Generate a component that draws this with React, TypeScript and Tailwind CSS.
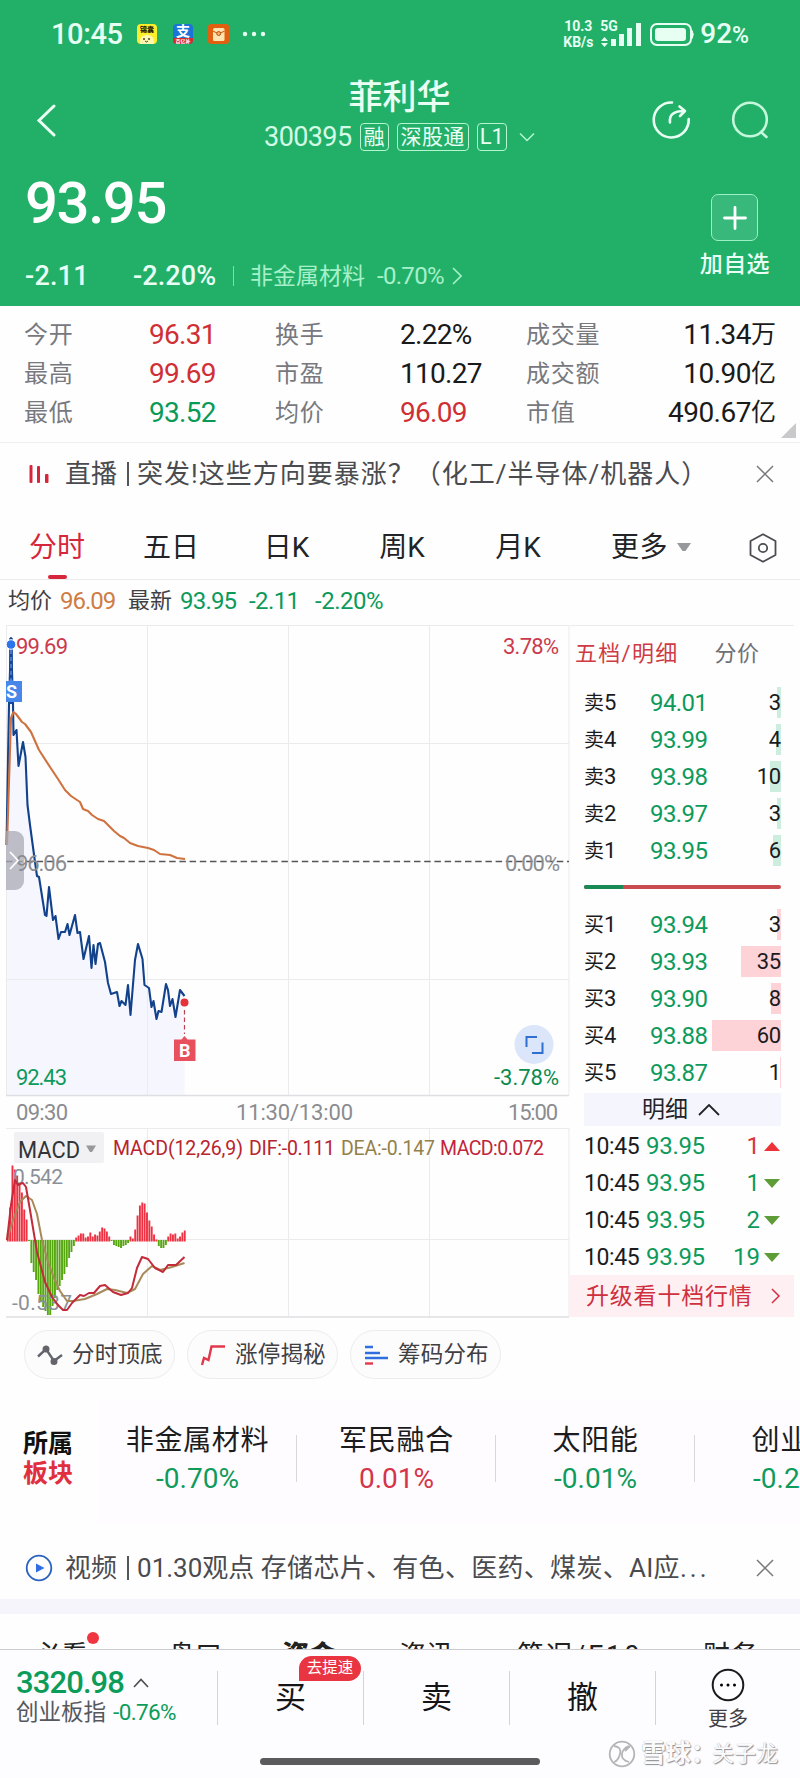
import { ReactNode } from "react";

const stats = [
  [
    { label: "今开", value: "96.31", color: "text-[#cf2f35]" },
    { label: "最高", value: "99.69", color: "text-[#cf2f35]" },
    { label: "最低", value: "93.52", color: "text-[#0a9a58]" },
  ],
  [
    { label: "换手", value: "2.22%", color: "text-[#1a1a1a]" },
    { label: "市盈", value: "110.27", color: "text-[#1a1a1a]" },
    { label: "均价", value: "96.09", color: "text-[#cf2f35]" },
  ],
];

const totals = [
  { label: "成交量", value: "11.34", unit: "万" },
  { label: "成交额", value: "10.90", unit: "亿" },
  { label: "市值", value: "490.67", unit: "亿" },
];

const asks = [
  { label: "卖5", price: "94.01", volume: 3, width: 4 },
  { label: "卖4", price: "93.99", volume: 4, width: 5 },
  { label: "卖3", price: "93.98", volume: 10, width: 11 },
  { label: "卖2", price: "93.97", volume: 3, width: 4 },
  { label: "卖1", price: "93.95", volume: 6, width: 8 },
];

const bids = [
  { label: "买1", price: "93.94", volume: 3, width: 4 },
  { label: "买2", price: "93.93", volume: 35, width: 40 },
  { label: "买3", price: "93.90", volume: 8, width: 10 },
  { label: "买4", price: "93.88", volume: 60, width: 69 },
  { label: "买5", price: "93.87", volume: 1, width: 1 },
];

const trades = [
  { volume: 1, up: true },
  { volume: 1, up: false },
  { volume: 2, up: false },
  { volume: 19, up: false },
];

const sectors = [
  { name: "非金属材料", change: "-0.70%", color: "text-[#0e9b5c]" },
  { name: "军民融合", change: "0.01%", color: "text-[#d5344a]" },
  { name: "太阳能", change: "-0.01%", color: "text-[#0e9b5c]" },
  { name: "创业板", change: "-0.25%", color: "text-[#0e9b5c]" },
];

// one bar per minute since the open
const macdBars = [
  8, 34, 76, 72, 66, 58, 49, 32, 22, -1, -23, -32, -40, -54, -62, -67, -71, -75, -75, -66, -58, -50, -46, -40, -34,
  -27, -18, -12, -6, 4, 6, 8, 8, 4, 5, 9, 5, 7, 6, 10, 14, 13, 10, 5, -1, -5, -6, -7, -8, -6, -5, -3, 5, 3, 12, 26,
  36, 39, 38, 29, 21, 15, 7, 2, -6, -8, -8, -5, 5, 8, 7, 8, 3, 5, 9, 11,
];

const pricePoints =
  "6.5,845 9,704 11,638 13,704 13.5,735 16.5,730 18.5,766 23,742 25.5,757 27.5,805 30,825 35,862 37,876 39,877 45,915 46.5,916 49,887 53,920 55.5,916 58.5,939 61,932 65,932 67.5,924 69.5,935 75,915 77.5,933 80,932 83.5,959 89,936 91.5,968 93.5,945 95.5,964 98,944 100,943 105,962 108,983 111,994 117,992 119.5,1006 121.5,1001 125.5,1005 128,985 130.5,1015 135,960 138,944 142.5,959 144.5,985 149,988 151.5,1007 153.5,1001 156.5,1019 158.5,1011 161.5,1012 166,984 168,990 170,1006 172.5,999 175.5,1017 180,990 184.5,996";

const averagePoints =
  "7,845 11,718 13.5,712 16,714 22,722 25,724 31,732 39,750 50,767 58,779 65,790 71,796 80,802 83,809 88,811 92,815 98,819 104,821 110,827 114,831 120,836 124,838 130,843 138,846 148,848 154,850 160,854 170,855 177,858 185,859";

const difPoints =
  "7,1240 11,1205 15,1180 18,1185 20,1184 23,1183 26,1187 30,1210 37,1252 45,1282 52,1297 58,1305 63,1310 67,1310 72,1303 80,1295 84,1296 89,1293 94,1293 100,1286 105,1285 113,1292 121,1295 128,1293 132,1288 137,1268 142,1257 148,1259 155,1268 163,1272 168,1265 176,1265 184.5,1257";

const deaPoints =
  "7,1240 13,1220 20,1202 26,1196 32,1200 37,1214 42,1240 48,1262 54,1278 60,1291 67,1301 73,1301 85,1299 97,1294 107,1289 115,1290 127,1293 135,1289 143,1274 152,1266 160,1270 172,1267 184.5,1263";

const StatusBar = () => (
  <div className="flex h-[68px] items-center justify-between pl-[51px] pr-[51px] text-[#e6fff2]">
    <div className="flex items-center">
      <span className="w-[86px] text-[29px] font-medium leading-none tracking-[-0.4px]">10:45</span>
      <span className="flex size-5 flex-col items-center overflow-hidden rounded bg-[#fdee2c]">
        <span className="mt-[2px] text-[7px] font-black leading-[8px] text-[#2a2408]">锦囊</span>
        <svg viewBox="0 0 20 10" className="h-[10px] w-5">
          <path d="M3 7c0-8 14-8 14 0v4H3z" fill="#fff6b0" />
          <circle cx="7" cy="5" r="1" fill="#442" />
          <circle cx="12" cy="5" r="1" fill="#442" />
          <path d="M8 7q1.500 2 3 0" fill="none" stroke="#442" />
        </svg>
      </span>
      <span className="ml-4 flex size-5 flex-col items-center overflow-hidden rounded bg-[#1c74d8]">
        <span className="text-[14px] font-bold leading-[14px] text-white">支</span>
        <span className="h-[6px] w-5 bg-[#d92b2b] text-center text-[5px] font-bold leading-[6px] text-white">百亿补</span>
      </span>
      <svg viewBox="0 0 21 20" className="ml-[15px] h-5 w-[21px]">
        <rect width="21" height="20" rx="3" fill="#e0600f" />
        <rect x="5" y="4" width="11.500" height="13" rx="1.500" fill="#ffe3b0" />
        <path d="M5 7q5.500 4 11.500 0" fill="none" stroke="#d8691f" strokeWidth="1.200" />
        <circle cx="10.700" cy="9.500" r="2" fill="#f6b15a" stroke="#b4501a" />
      </svg>
      <svg viewBox="0 0 24 6" className="ml-[13px] h-[6px] w-6 fill-current">
        <circle cx="3" cy="3" r="2.200" />
        <circle cx="12" cy="3" r="2.200" />
        <circle cx="21" cy="3" r="2.200" />
      </svg>
    </div>
    <div className="flex items-center">
      <div className="w-[36px] text-[14px] font-bold leading-[16px]">
        <div>10.3</div>
        <div className="-ml-px">KB/s</div>
      </div>
      <div className="relative h-8 w-[42px]">
        <span className="absolute left-0 top-0 text-[14px] font-bold leading-[16px]">5G</span>
        <svg viewBox="0 0 42 32" className="absolute inset-0 fill-current">
          <path d="M1 23l3.500-4 3.500 4zM1 25l3.500 4 3.500-4z" />
          <rect x="11" y="21" width="5" height="7" />
          <rect x="19" y="16" width="5" height="12" />
          <rect x="27" y="10" width="5" height="18" />
          <rect x="36" y="5" width="5" height="23" />
        </svg>
      </div>
      <svg viewBox="0 0 44 23" className="ml-2 h-[23px] w-11">
        <rect x="1" y="1" width="40" height="21" rx="6" fill="none" stroke="currentColor" strokeWidth="2" />
        <rect x="5" y="5" width="31" height="13" rx="3" fill="currentColor" />
        <path d="M42 7.500q2.500 4 0 8z" fill="currentColor" stroke="currentColor" />
      </svg>
      <span className="ml-[6px] flex items-baseline font-medium leading-none">
        <span className="text-[28px]">92</span>
        <span className="text-[23px]">%</span>
      </span>
    </div>
  </div>
);

const Tag = ({ children }: { children: ReactNode }) => (
  <span className="flex h-7 items-center rounded border border-[#b5f5d2] px-[3px] text-[21px] leading-none">{children}</span>
);

const Header = () => (
  <header className="h-[306px] bg-[#22b069] text-[#eafff4]">
    <StatusBar />
    <div className="flex h-[92px] items-start justify-between pl-9 pr-[30px]">
      <svg viewBox="0 0 22 34" className="mt-[35px] h-[34px] w-[22px]" fill="none" stroke="currentColor" strokeWidth="3" strokeLinecap="round">
        <path d="M18 3L3 17.500 18 32" />
      </svg>
      <div className="ml-[90px] flex flex-col items-center">
        <h1 className="mt-[12px] text-[34px] font-medium leading-[34px]">菲利华</h1>
        <div className="mt-[9px] flex items-center gap-2">
          <span className="text-[27px] leading-none tracking-[-0.6px] text-[#d3fbe5]">300395</span>
          <Tag>融</Tag>
          <Tag><span className="tracking-[0.4px]">深股通</span></Tag>
          <Tag><span className="-mx-px text-[22px]">L1</span></Tag>
          <svg viewBox="0 0 16 10" className="ml-[4px] h-[10px] w-4" fill="none" stroke="#b5f5d2" strokeWidth="1.500">
            <path d="M1 1.500l7 7 7-7" />
          </svg>
        </div>
      </div>
      <div className="mt-[32px] flex gap-[39px]">
        <svg viewBox="0 0 40 40" className="size-10" fill="none" stroke="currentColor" strokeWidth="2.600" strokeLinecap="round" strokeLinejoin="round">
          <path d="M21 2.500A17.500 17.500 0 1 0 37.700 19" />
          <path d="M19 22.500c-1-8 4-11.500 14-11.500M28.500 6.500l5.500 4.500-5 5" />
        </svg>
        <svg viewBox="0 0 40 40" className="size-10" fill="none" stroke="#c5f7dc" strokeWidth="2.600" strokeLinecap="round">
          <circle cx="20" cy="19.500" r="16.800" />
          <path d="M31 32l5.500 5" />
        </svg>
      </div>
    </div>
    <div className="flex justify-between pl-[25px] pr-[30px]">
      <div>
        <div className="mt-[15px] text-[58px] font-medium leading-[56px] tracking-[-1.400px] text-white">93.95</div>
        <div className="mt-[31px] flex h-7 items-center text-[27px] font-medium leading-none">
          <span className="w-[108px] tracking-[0.2px]">-2.11</span>
          <span className="w-[100px] tracking-[0.1px]">-2.20%</span>
          <span className="h-5 w-px bg-[#7fdcab]" />
          <span className="ml-4 text-[23px] font-normal text-[#a6f1ca]">非金属材料</span>
          <span className="ml-3 text-[24px] font-normal tracking-[-0.7px] text-[#a6f1ca]">-0.70%</span>
          <svg viewBox="0 0 10 18" className="ml-2 h-[18px] w-[10px]" fill="none" stroke="#a6f1ca" strokeWidth="1.600">
            <path d="M1 1l8 8-8 8" />
          </svg>
        </div>
      </div>
      <div className="flex flex-col items-center">
        <div className="mt-[34px] flex size-[47px] items-center justify-center rounded-[7px] border border-[#9bf0c4] bg-[#38b87b]">
          <svg viewBox="0 0 24 24" className="size-6" stroke="#fff" strokeWidth="2.800" strokeLinecap="round">
            <path d="M12 1.500v21M1.500 12h21" />
          </svg>
        </div>
        <span className="mt-[12px] text-[23px] font-medium leading-[24px] tracking-[0.4px]">加自选</span>
      </div>
    </div>
  </header>
);

const Stats = () => (
  <section className="relative flex h-[137px] border-b border-[#efeff1] pl-[24px] pt-[9px]">
    {stats.map((column, i) => (
      <div key={i} className="w-[251px]">
        {column.map((item) => (
          <div key={item.label} className="flex h-[39px] items-center leading-none">
            <span className="w-[125px] text-[24px] tracking-[0.7px] text-[#77797e]">{item.label}</span>
            <span className={`text-[28px] tracking-[-0.7px] ${item.color}`}>{item.value}</span>
          </div>
        ))}
      </div>
    ))}
    <div className="w-[250px]">
      {totals.map((item) => (
        <div key={item.label} className="flex h-[39px] items-center justify-between leading-none">
          <span className="text-[24px] tracking-[0.7px] text-[#77797e]">{item.label}</span>
          <span className="flex items-center text-[#1a1a1a]">
            <span className="text-[28px] tracking-[-0.5px]">{item.value}</span>
            <span className="text-[25px]">{item.unit}</span>
          </span>
        </div>
      ))}
    </div>
    <svg viewBox="0 0 15 15" className="absolute bottom-[4px] right-[4px] size-[15px]">
      <path d="M15 0v15H0z" fill="#c9c9cb" />
    </svg>
  </section>
);

const CloseIcon = () => (
  <svg viewBox="0 0 18 18" className="mr-[26px] size-[18px]" stroke="#77787c" strokeWidth="1.500">
    <path d="M1 1l16 16M17 1L1 17" />
  </svg>
);

const Tabs = () => (
  <nav className="flex h-[66px] items-center border-b border-[#ececee] pt-[2px] text-[28px] leading-none text-[#222326]">
    <div className="relative flex h-full w-[114px] items-center justify-center text-[#d6263c]">
      分时
      <span className="absolute bottom-[0px] h-[4px] w-[19px] rounded-full bg-[#d6263c]" />
    </div>
    <div className="w-[114px] text-center">五日</div>
    <div className="w-[117px] text-center">日K</div>
    <div className="w-[114px] text-center">周K</div>
    <div className="w-[118px] text-center">月K</div>
    <div className="ml-[34px] tracking-[0.5px]">更多</div>
    <svg viewBox="0 0 14 9" className="ml-[9px] h-[9px] w-[14px]">
      <path d="M0 0h14L8.500 8h-3z" fill="#97989b" />
    </svg>
    <svg viewBox="0 0 28 30" className="ml-[58px] h-[30px] w-7" fill="none" stroke="#4b4d52" strokeWidth="1.800" strokeLinejoin="round">
      <path d="M14 1.200L26.500 8v14L14 28.800 1.500 22V8z" />
      <circle cx="14" cy="15" r="4.200" />
    </svg>
  </nav>
);

// both panes share one time axis, y runs from the top of the price pane to the bottom of the MACD pane
const Charts = () => (
  <svg viewBox="0 625 570 693" className="h-[693px] w-[570px] shrink-0">
    <polygon points={`6.5,1095 ${pricePoints} 184.500,1095`} fill="#f6f6fe" />
    <g stroke="#ebebee" fill="none">
      <path d="M6.500 1095.500V625.500H569V1095.500M147.500 625V1095M288.500 625V1095M429.500 625V1095M6 743.500H569M6 979.500H569" />
      <path d="M6 1128.500H569M147.500 1128V1317M288.500 1128V1317M429.500 1128V1317M6 1239.500H569M569 1128V1317" />
      <path d="M6 1095.500H569M6 1317H569" stroke="#dfdfe3" strokeWidth="1.500" />
    </g>
    <path d="M6 861.500H569" stroke="#55565a" strokeWidth="1.300" strokeDasharray="6.500 3.700" />

    <polyline points={pricePoints} fill="none" stroke="#12428c" strokeWidth="2.100" strokeLinejoin="round" />
    <polyline points={averagePoints} fill="none" stroke="#cf7240" strokeWidth="2.100" strokeLinejoin="round" />
    <path d="M11 638V704" stroke="#17479d" strokeWidth="3.500" />
    <path d="M11 650V678" stroke="#7fa6ec" strokeDasharray="4 3" />
    <circle cx="11" cy="644.500" r="4.800" fill="#2d74ea" stroke="#fff" />
    <path d="M6 681h3l2-3.500 2 3.500h9v21H6z" fill="#4787ea" />

    <path d="M6 831h9a9 9 0 0 1 9 9v41a9 9 0 0 1-9 9H6z" fill="#a9aab6" fillOpacity=".75" />

    <circle cx="184.500" cy="1002.500" r="4" fill="#e5313a" />
    <path d="M184.500 1010V1034" stroke="#b84453" strokeWidth="1.200" strokeDasharray="4.500 3" />
    <path d="M174 1039.500h7.500l3-3.500 3 3.500h8v21.500H174z" fill="#e9505d" />
    <circle cx="534" cy="1044.500" r="19.500" fill="#dbe6fb" />
    <path d="M537 1037H526.500V1047M532 1053H542.500V1042.500" fill="none" stroke="#2f6fd0" strokeWidth="2" />

    <rect x="14" y="1132" width="90" height="31" rx="2" fill="#f1f1f3" />
    <path d="M86 1145.500h10l-4 6.500h-2z" fill="#97989b" />

    {macdBars.map((h, i) => (
      <rect
        key={i}
        x={6.8 + i * 2.36}
        y={h > 0 ? 1241.500 - h : 1240}
        width="1.9"
        height={Math.abs(h)}
        fill={h > 0 ? "#ee3243" : "#55a60f"}
      />
    ))}

    <g fontSize="22" fill="#8b8c90">
      <text x="16" y="654" textLength="52" fill="#cb3a4c">99.69</text>
      <text x="16" y="871" textLength="51">96.06</text>
      <text x="16" y="1085" textLength="51" fill="#0e9a5c">92.43</text>
      <text x="503" y="654" textLength="56" fill="#cb3a4c">3.78%</text>
      <text x="505" y="871" textLength="55">0.00%</text>
      <text x="494" y="1085" textLength="65" fill="#0b8b50">-3.78%</text>
      <text x="16" y="1120" textLength="52">09:30</text>
      <text x="236" y="1120" textLength="117">11:30/13:00</text>
      <text x="508" y="1120" textLength="50">15:00</text>
    </g>
    <text x="6" y="698" fontSize="18" fontWeight="700" fill="#fff">S</text>
    <text x="179" y="1057" fontSize="18" fontWeight="700" fill="#fff">B</text>
    <path d="M10 852l8 8.500-8 8.500" fill="none" stroke="#fff" strokeWidth="1.800" />

    <text x="18" y="1158" fontSize="24" textLength="62" lengthAdjust="spacingAndGlyphs" fill="#333438">MACD</text>
    <g fontSize="19.500">
      <text x="113" y="1154.500" textLength="130" fill="#b8242e">MACD(12,26,9)</text>
      <text x="249" y="1154.500" textLength="86" fill="#b8242e">DIF:-0.111</text>
      <text x="341" y="1154.500" textLength="94" fill="#93804a">DEA:-0.147</text>
      <text x="440" y="1154.500" textLength="104" fill="#c2253a">MACD:0.072</text>
    </g>
    <g fontSize="21" fill="#8a9099">
      <text x="13" y="1184" textLength="50">0.542</text>
      <text x="12" y="1310" textLength="60">-0.537</text>
    </g>
    <polyline points={deaPoints} fill="none" stroke="#a8895a" strokeWidth="2" strokeLinejoin="round" />
    <polyline points={difPoints} fill="none" stroke="#c22b3a" strokeWidth="2" strokeLinejoin="round" />
  </svg>
);

const Depth = ({ rows, bar }: { rows: typeof asks; bar: string }) => (
  <div>
    {rows.map((row) => (
      <div key={row.label} className="relative flex h-[37px] items-center leading-none text-[#1b1b1d]">
        <span className={`absolute right-0 top-[3px] h-[31px] ${bar}`} style={{ width: row.width }} />
        <span className="flex w-[66px] items-center text-[20px]">
          {row.label[0]}
          <span className="text-[22px]">{row.label[1]}</span>
        </span>
        <span className="text-[24px] tracking-[-0.6px] text-[#0d9a5b]">{row.price}</span>
        <span className="relative ml-auto text-[22px] tracking-[-0.2px]">{row.volume}</span>
      </div>
    ))}
  </div>
);

const OrderBook = () => (
  <aside className="w-[224px] border-t border-[#ebebee]">
    <div className="flex h-[58px] items-center pb-[2px] pl-[5px] leading-none">
      <span className="text-[22px] tracking-[1.300px] text-[#cf3b44]">五档/明细</span>
      <span className="ml-[36px] text-[22px] tracking-[0.4px] text-[#6e7075]">分价</span>
    </div>
    <div className="ml-[14px] w-[197px]">
      <Depth rows={asks} bar="bg-[#cdeedf]" />
      <div className="mb-[17px] mt-[16px] flex h-[4px] overflow-hidden rounded-full bg-[#c94c50]">
        <span className="w-[39px] bg-[#198a56]" />
      </div>
      <Depth rows={bids} bar="bg-[#fdd3d8]" />
      <div className="mb-px mt-[2px] flex h-[33px] items-center justify-center gap-[10px] bg-[#f5f5fd] pr-[3px] text-[23px] leading-none text-[#232326]">
        明细
        <svg viewBox="0 0 22 12" className="h-3 w-[22px]" fill="none" stroke="currentColor" strokeWidth="1.800">
          <path d="M1 11L11 1l10 10" />
        </svg>
      </div>
      {trades.map((trade, i) => (
        <div key={i} className="flex h-[37px] items-center pt-px leading-none">
          <span className="w-[62px] text-[23px] tracking-[-0.4px] text-[#1b1b1d]">10:45</span>
          <span className="text-[24px] tracking-[-0.3px] text-[#0d9a5b]">93.95</span>
          <span className={`ml-auto text-[24px] ${trade.up ? "text-[#d9363e]" : "text-[#0d9a5b]"}`}>{trade.volume}</span>
          <svg viewBox="0 0 16 9" className="ml-[4px] mr-px h-[9px] w-4">
            <path d={trade.up ? "M0 9L8 0l8 9z" : "M0 0h16L8 9z"} fill={trade.up ? "#ee3338" : "#5e9c37"} />
          </svg>
        </div>
      ))}
    </div>
    <div className="flex h-[42px] items-center justify-between bg-[#fdeff2] pl-[16px] pr-[14px] text-[23px] leading-none tracking-[0.8px] text-[#cf2f3f]">
      升级看十档行情
      <svg viewBox="0 0 9 16" className="h-4 w-[9px]" fill="none" stroke="currentColor" strokeWidth="1.500">
        <path d="M1 1l7 7-7 7" />
      </svg>
    </div>
  </aside>
);

const Pill = ({ icon, label }: { icon: ReactNode; label: string }) => (
  <button className="flex h-[49px] w-[151px] items-center gap-[9px] rounded-full border border-[#ececee] bg-[#fdfcfd] pl-[12px] text-[22.500px] leading-none tracking-[0.2px] text-[#3f4044]">
    {icon}
    {label}
  </button>
);

const Tools = () => (
  <div className="flex gap-[12px] pl-6 pt-[12px]">
    <Pill
      label="分时顶底"
      icon={
        <svg viewBox="0 0 26 22" className="h-[22px] w-[26px]" fill="none" stroke="#63656b" strokeWidth="2.400">
          <path d="M1 12.500l8-7.500 8 12 8-6" />
          <circle cx="9" cy="5" r="2.300" fill="#63656b" />
          <circle cx="17" cy="17.500" r="2.300" fill="#63656b" />
        </svg>
      }
    />
    <Pill
      label="涨停揭秘"
      icon={
        <svg viewBox="0 0 26 22" className="h-[22px] w-[26px]" fill="none" stroke="#e2384c" strokeWidth="2.400">
          <path d="M2 21l2-7 4.500 2L11.500 2.500H25" />
        </svg>
      }
    />
    <Pill
      label="筹码分布"
      icon={
        <svg viewBox="0 0 26 22" className="h-[22px] w-[26px]" fill="none" strokeWidth="2.400">
          <path d="M2 3h8M2 9h15M2 14h23" stroke="#2f6fe0" />
          <path d="M2 19.500h8" stroke="#e2384c" />
        </svg>
      }
    />
  </div>
);

const Sectors = () => (
  <section className="mt-[20px] flex h-[124px]">
    <div className="flex w-[98px] flex-col justify-center pb-[4px] pl-[23px] text-[25px] font-bold leading-[30px]">
      <span className="text-[#111]">所属</span>
      <span className="text-[#e0303f]">板块</span>
    </div>
    <div className="flex flex-1 overflow-hidden bg-[#fefcfe]">
      {sectors.map((s) => (
        <div key={s.name} className="relative flex w-[199px] shrink-0 flex-col items-center pt-[26px]">
          <span className="text-[28px] leading-[32px] tracking-[0.7px] text-[#1c1c1e]">{s.name}</span>
          <span className={`mt-[5px] text-[28px] leading-[34px] ${s.color}`}>{s.change}</span>
          <span className="absolute right-0 top-[36px] h-[47px] w-px bg-[#d9d9dd]" />
        </div>
      ))}
    </div>
  </section>
);

const InfoTabs = () => (
  <div className="relative flex h-[35px] items-start overflow-hidden pt-[26px] text-[27px] leading-[32px] text-[#222]">
    <span className="w-[134px] pl-[34px]">必看</span>
    <span className="w-[114px] pl-[34px]">盘口</span>
    <span className="w-[114px] pl-[34px] font-black">资金</span>
    <span className="w-[120px] pl-[37px]">资讯</span>
    <span className="w-[186px] pl-[35px] tracking-[1.500px]">
      简况<span className="tracking-[3px]">/F10</span>
    </span>
    <span className="pl-[35px] tracking-[1px]">财务</span>
    <span className="absolute left-[87px] top-[18px] size-3 rounded-full bg-[#ee3540]" />
  </div>
);

const Divider = () => <span className="mt-[21px] h-[54px] w-px shrink-0 bg-[#d4d4d8]" />;

const BottomBar = () => (
  <footer className="relative h-[129px] border-t border-[#cbcbcf] bg-[#fdfcfe]">
    <div className="flex">
      <div className="w-[217px] pl-4 pt-[16px]">
        <div className="flex items-center text-[31px] font-medium leading-[34px] tracking-[-0.9px] text-[#0c9c5a]">
          3320.98
          <svg viewBox="0 0 16 10" className="ml-[9px] h-[10px] w-4" fill="none" stroke="#4b4d52" strokeWidth="1.600">
            <path d="M1 9l7-7.500L15 9" />
          </svg>
        </div>
        <div className="flex items-center text-[22.500px] leading-[24px] text-[#56585d]">
          创业板指
          <span className="ml-[7px] tracking-[-0.6px] text-[#0c9c5a]">-0.76%</span>
        </div>
      </div>
      <Divider />
      <div className="relative w-[145px] pt-[30px] text-center text-[31px] leading-[36px] text-[#151517]">
        买
        <span className="absolute left-[81px] top-[6px] h-[25px] w-[62px] rounded-full rounded-bl-none bg-[#e93541] text-center text-[15.500px] leading-[25px] text-white">
          去提速
        </span>
      </div>
      <Divider />
      <div className="w-[145px] pt-[30px] text-center text-[31px] leading-[36px] text-[#151517]">卖</div>
      <Divider />
      <div className="w-[145px] pt-[30px] text-center text-[31px] leading-[36px] text-[#151517]">撤</div>
      <Divider />
      <div className="flex flex-1 flex-col items-center pt-[18px]">
        <svg viewBox="0 0 34 34" className="size-[34px]">
          <circle cx="17" cy="17" r="15.300" fill="none" stroke="#1b1b1d" strokeWidth="2" />
          <circle cx="10.500" cy="17" r="1.500" />
          <circle cx="17" cy="17" r="1.500" />
          <circle cx="23.500" cy="17" r="1.500" />
        </svg>
        <span className="mt-[6px] text-[20px] leading-[22px] text-[#3f4044]">更多</span>
      </div>
    </div>
    <div className="absolute bottom-[13px] left-[260px] h-[7px] w-[280px] rounded-full bg-[#5b5b5d]" />
    <div className="absolute left-[608px] top-[90px] flex items-center text-[#fbfbfc] [text-shadow:1px_1px_1px_#8f8f95,0_0_1px_#a8a8ae]">
      <svg viewBox="0 0 28 28" className="size-7" fill="none" stroke="#b4b4b9" strokeWidth="1.800">
        <circle cx="14" cy="14" r="12.300" />
        <path d="M6 6q8 1 6 8t-6 8M21 6q-6 2-7 8t7 8M17 11l5-5" />
      </svg>
      <span className="ml-[5px] w-[71px] whitespace-nowrap text-[25px] font-bold leading-[28px]">雪球：</span>
      <span className="text-[22px] leading-[28px]">关子龙</span>
    </div>
  </footer>
);

const App = () => {
  return (
    <div className="h-[1778px] w-[800px] overflow-hidden bg-[#fefefe] font-['Roboto','Noto_Sans_CJK_SC',sans-serif]">
      <Header />
      <Stats />

      {/* Live banner */}
      <div className="flex h-[71px] items-center pb-[9px] text-[26px] leading-none text-[#4a4b4f]">
        <svg viewBox="0 0 20 18" className="ml-[29px] h-[18px] w-5 fill-[#d6263c]">
          <rect x="0.500" y="0" width="3" height="18" rx="1" />
          <rect x="8" y="1" width="3" height="17" rx="1" />
          <rect x="16" y="9" width="3.500" height="9" rx="1" />
        </svg>
        <span className="ml-4">直播</span>
        <span className="ml-[10px] h-6 w-[2px] bg-[#55565a]" />
        <span className="ml-[8px] flex-1 whitespace-nowrap tracking-[1px]">突发!这些方向要暴涨？（化工/半导体/机器人）</span>
        <CloseIcon />
      </div>

      <Tabs />

      <div className="flex h-[45px] items-center pb-[3px] pl-2 text-[22px] leading-none text-[#3f4044]">
        均价
        <span className="ml-2 w-[68px] text-[24px] tracking-[-1px] text-[#cf7c45]">96.09</span>
        最新
        <span className="ml-2 w-[69px] text-[24px] tracking-[-0.8px] text-[#0c9a5a]">93.95</span>
        <span className="w-[66px] text-[24px] tracking-[-0.6px] text-[#0c9a5a]">-2.11</span>
        <span className="text-[24px] tracking-[-0.5px] text-[#0c9a5a]">-2.20%</span>
      </div>

      <div className="flex">
        <Charts />
        <OrderBook />
      </div>

      <Tools />
      <Sectors />

      {/* Video banner */}
      <div className="flex h-[76px] items-center pt-[14px] text-[26px] leading-none text-[#4a4b4f]">
        <svg viewBox="0 0 28 28" className="ml-[25px] size-7">
          <circle cx="14" cy="14" r="12.300" fill="none" stroke="#2a62bd" strokeWidth="1.800" />
          <path d="M11 9.500v9l8.500-4.500z" fill="#2f6fe0" />
        </svg>
        <span className="ml-3">视频</span>
        <span className="ml-[10px] h-6 w-[2px] bg-[#55565a]" />
        <span className="ml-[8px] flex-1 whitespace-nowrap">
          01.30观点 <span className="tracking-[0.3px]">存储芯片、有色、医药、煤炭、AI应</span>
          <span className="tracking-[3px]">...</span>
        </span>
        <CloseIcon />
      </div>
      <div className="h-[15px] bg-[#f5f5fb]" />

      <InfoTabs />
      <BottomBar />
    </div>
  );
};

export default App;
